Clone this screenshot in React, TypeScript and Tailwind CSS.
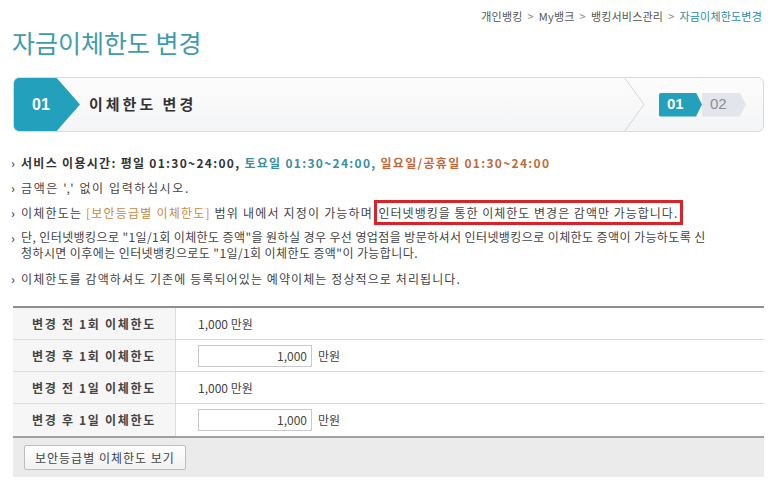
import React from 'react';

const font = { fontFamily: '"Noto Sans CJK KR", "Liberation Sans", sans-serif' };

function Bullet({ children }: { children: React.ReactNode }) {
    return (
        <li className="flex gap-[4px] leading-[15px]">
            <span className="text-[#555] font-bold w-[6px] shrink-0">›</span>
            <div>{children}</div>
        </li>
    );
}

function Row({ label, children, last }: { label: string; children: React.ReactNode; last?: boolean }) {
    return (
        <div className={`flex h-[32px] ${last ? '' : 'border-b border-[#dcdcdc]'}`}>
            <div className="w-[163px] shrink-0 bg-[#f6f6f6] border-r border-[#dcdcdc] flex items-center justify-center text-[12px] font-bold text-[#444] tracking-[1.7px]">
                {label}
            </div>
            <div className="flex items-center pl-[22px] text-[12px] text-[#444]">{children}</div>
        </div>
    );
}

function LimitInput() {
    return (
        <div className="flex items-center gap-[6px]">
            <div className="w-[114px] h-[22px] border border-[#c9c9c9] bg-white flex items-center justify-end pr-[4px] text-[12px] text-[#444]">
                1,000
            </div>
            <span className="text-[12px]">만원</span>
        </div>
    );
}

export default function App() {
    return (
        <div className="w-[772px] h-[489px] bg-white overflow-hidden pl-[13px] pr-[8px]" style={font}>
            {/* Breadcrumb */}
            <div className="flex justify-end items-center gap-[5px] pt-[8px] h-[24px] text-[11px] text-[#555] pr-[2px] tracking-[0.2px]">
                <span>개인뱅킹</span>
                <span className="text-[#888]">&gt;</span>
                <span>My뱅크</span>
                <span className="text-[#888]">&gt;</span>
                <span>뱅킹서비스관리</span>
                <span className="text-[#888]">&gt;</span>
                <span className="text-[#2c8ea3]">자금이체한도변경</span>
            </div>

            {/* Title */}
            <h1 className="text-[25px] leading-[34px] text-[#3f9bb0] mt-[1px] -ml-[1px]">자금이체한도 변경</h1>

            {/* Step box */}
            <div className="mt-[18px] h-[55px] rounded-[6px] border border-[#dadada] bg-gradient-to-b from-[#fcfcfc] to-[#f4f5f6] flex items-stretch relative overflow-hidden">
                <div className="w-[67px] -m-px bg-[#23a0bb] rounded-l-[8px] [clip-path:polygon(0_0,64%_0,100%_50%,64%_100%,0_100%)] flex items-center pl-[19px] text-white text-[16px] font-bold" style={{ fontFamily: '"Liberation Sans", sans-serif' }}>
                    01
                </div>
                <div className="flex items-center pl-[10px] text-[15px] font-bold text-[#333] tracking-[3px] flex-1">이체한도 변경</div>
                <svg width="30" height="55" viewBox="0 0 30 55" className="shrink-0 -my-px">
                    <polyline points="2,0 22,27.5 2,55" fill="none" stroke="#d6d6d6" strokeWidth="1" />
                </svg>
                <div className="flex items-center pr-[17px] pl-[7px]" style={{ fontFamily: '"Liberation Sans", sans-serif' }}>
                    <div className="w-[43px] h-[24px] bg-[#23a0bb] [clip-path:polygon(0_0,86%_0,100%_50%,86%_100%,0_100%)] flex items-center pl-[8px] text-white text-[15px] font-bold rounded-l-[2px]">
                        01
                    </div>
                    <div className="w-[44px] h-[24px] bg-[#e3e5ec] [clip-path:polygon(0_0,86%_0,100%_50%,86%_100%,0_100%)] flex items-center pl-[8px] text-[#8a8d95] text-[15px]">
                        02
                    </div>
                </div>
            </div>

            {/* Notices */}
            <ul className="mt-[23px] flex flex-col gap-[10px] text-[12px] text-[#444] -ml-[2px]">
                <Bullet>
                    <span className="font-bold text-[#333] tracking-[1.3px]">서비스 이용시간: 평일 01:30~24:00, </span>
                    <span className="font-bold text-[#3a8ea0] tracking-[1.3px]">토요일 01:30~24:00, </span>
                    <span className="font-bold text-[#bf6a3c] tracking-[1.3px]">일요일/공휴일 01:30~24:00</span>
                </Bullet>
                <Bullet>
                    <span className="tracking-[1.6px]">금액은 ',' 없이 입력하십시오.</span>
                </Bullet>
                <Bullet>
                    <span className="tracking-[1.2px]">이체한도는 </span>
                    <span className="text-[#c98a3c] tracking-[1.2px]">[보안등급별 이체한도]</span>
                    <span className="tracking-[1.2px]"> 범위 내에서 지정이 가능하며, </span>
                    <span className="border-[3px] border-[#d8232a] px-[2px] py-[1px] -ml-[8px] tracking-[1px]">인터넷뱅킹을 통한 이체한도 변경은 감액만 가능합니다.</span>
                </Bullet>
                <Bullet>
                    <div className="tracking-[0.4px] leading-[16px] -mt-[1px]">
                        <div>단, 인터넷뱅킹으로 "1일/1회 이체한도 증액"을 원하실 경우 우선 영업점을 방문하셔서 인터넷뱅킹으로 이체한도 증액이 가능하도록 신</div>
                        <div>청하시면 이후에는 인터넷뱅킹으로도 "1일/1회 이체한도 증액"이 가능합니다.</div>
                    </div>
                </Bullet>
                <Bullet>
                    <span className="tracking-[1.1px]">이체한도를 감액하셔도 기존에 등록되어있는 예약이체는 정상적으로 처리됩니다.</span>
                </Bullet>
            </ul>

            {/* Table */}
            <div className="mt-[20px] border-t-2 border-[#8e8e8e]">
                <Row label="변경 전 1회 이체한도">1,000 만원</Row>
                <Row label="변경 후 1회 이체한도">
                    <LimitInput />
                </Row>
                <Row label="변경 전 1일 이체한도">1,000 만원</Row>
                <Row label="변경 후 1일 이체한도" last>
                    <LimitInput />
                </Row>
                <div className="h-[41px] bg-[#ebebeb] border-t-2 border-[#a0a0a0] flex items-center pl-[11px]">
                    <button className="h-[25px] px-[10px] border border-[#bdbdbd] rounded-[2px] bg-gradient-to-b from-white to-[#f1f1f1] text-[12px] text-[#444] tracking-[1px]">
                        보안등급별 이체한도 보기
                    </button>
                </div>
            </div>
        </div>
    );
}
